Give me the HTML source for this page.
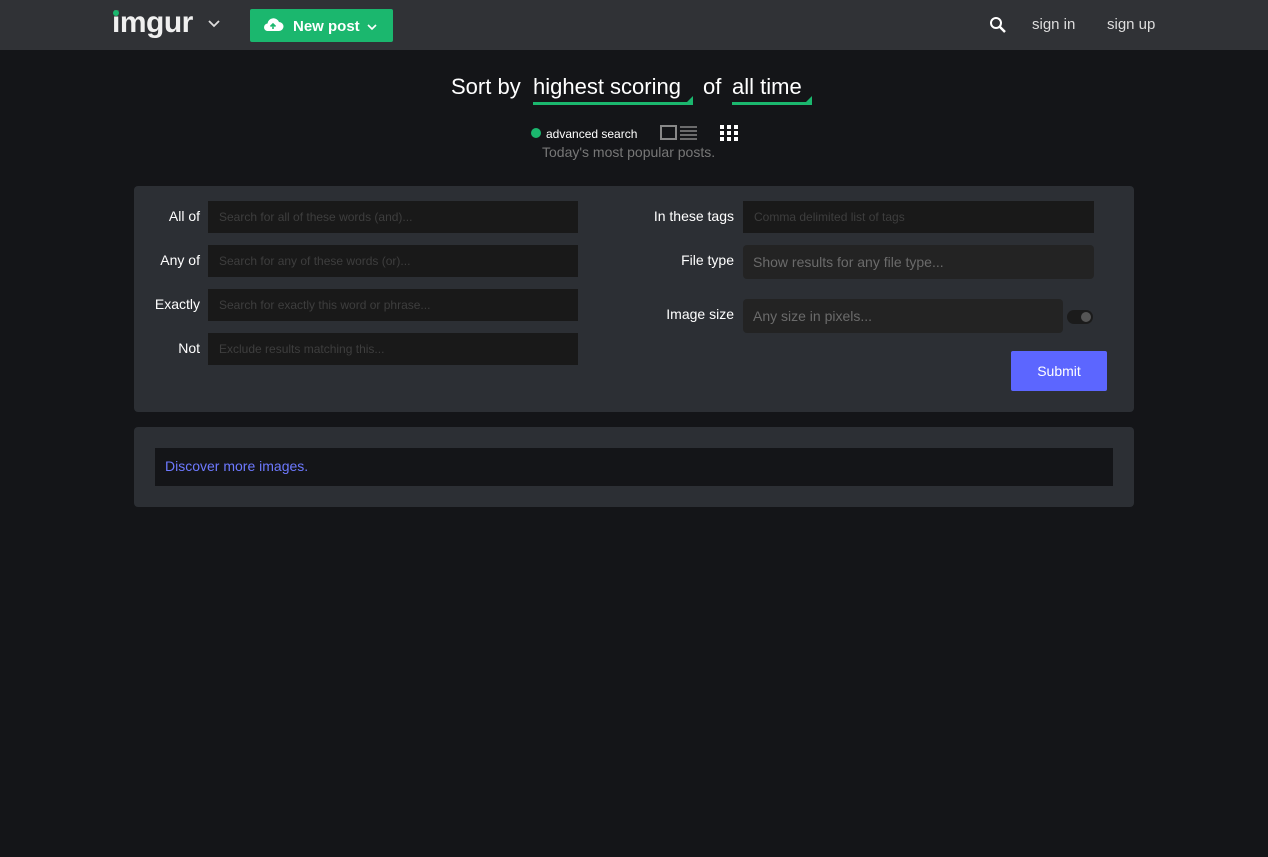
<!DOCTYPE html>
<html><head><meta charset="utf-8"><style>
*{margin:0;padding:0;box-sizing:border-box}
body{width:1268px;height:857px;background:#141518;font-family:"Liberation Sans",sans-serif;position:relative;overflow:hidden;color:#fff}
.a{position:absolute}
.hdr{left:0;top:0;width:1268px;height:50px;background:#303236}
.lbl{font-size:14px;color:#fff;text-align:right;width:120px}
.inp{background:#191919;height:32px;font-size:12px;color:#3e3e3e;padding:9px 11px}
.inp2{background:#232323;border-radius:4px;font-size:14px;color:#6b6b6b;padding:0 10px;line-height:32px}
</style></head><body>
<div class="a hdr"></div>
<div class="a" style="left:112px;top:6px;font-size:30px;font-weight:bold;letter-spacing:-0.5px;color:#f0f0f0">imgur</div>
<div class="a" style="left:113px;top:10px;width:6px;height:6px;border-radius:3px;background:#1bb76e"></div>
<svg class="a" style="left:208px;top:20px" width="12" height="8"><path d="M1 1l5 5 5-5" stroke="#ddd" stroke-width="1.8" fill="none"/></svg>
<div class="a" style="left:250px;top:9px;width:143px;height:33px;background:#1bb76e;border-radius:2px"></div>
<svg class="a" style="left:262px;top:17px" width="22" height="15"><path d="M5 14h12a4.5 4.5 0 0 0 0-9 6 6 0 0 0-11.5 1.5A3.8 3.8 0 0 0 5 14z" fill="#fff"/><path d="M11 12V7M8.5 9.5L11 7l2.5 2.5" stroke="#1bb76e" stroke-width="1.6" fill="none"/></svg>
<div class="a" style="left:293px;top:18px;font-size:15px;font-weight:bold;color:#fff">New post</div>
<svg class="a" style="left:367px;top:24px" width="10" height="7"><path d="M1 1l4 4 4-4" stroke="#fff" stroke-width="1.6" fill="none"/></svg>
<svg class="a" style="left:989px;top:16px" width="18" height="18"><circle cx="7" cy="7" r="5" stroke="#fff" stroke-width="2" fill="none"/><path d="M11 11l5 5" stroke="#fff" stroke-width="2.5"/></svg>
<div class="a" style="left:1032px;top:16px;font-size:15px;color:#ddd">sign in</div>
<div class="a" style="left:1107px;top:16px;font-size:15px;color:#ddd">sign up</div>

<div class="a" style="left:451px;top:74px;font-size:22px;color:#fff">Sort by</div>
<div class="a" style="left:533px;top:74px;font-size:22px;color:#fff">highest scoring</div>
<div class="a" style="left:533px;top:102px;width:160px;height:3px;background:#1bb76e"></div>
<div class="a" style="left:687px;top:96px;width:0;height:0;border-left:6px solid transparent;border-bottom:6px solid #1bb76e"></div>
<div class="a" style="left:703px;top:74px;font-size:22px;color:#fff">of</div>
<div class="a" style="left:732px;top:74px;font-size:22px;color:#fff">all time</div>
<div class="a" style="left:732px;top:102px;width:80px;height:3px;background:#1bb76e"></div>
<div class="a" style="left:806px;top:96px;width:0;height:0;border-left:6px solid transparent;border-bottom:6px solid #1bb76e"></div>

<div class="a" style="left:531px;top:128px;width:10px;height:10px;border-radius:5px;background:#1bb76e"></div>
<div class="a" style="left:546px;top:127px;font-size:12px;color:#fff">advanced search</div>
<div class="a" style="left:660px;top:125px;width:17px;height:15px;border:2px solid #888"></div>
<svg class="a" style="left:680px;top:125px" width="17" height="15"><path d="M0 2h17M0 6h17M0 10h17M0 14h17" stroke="#888" stroke-width="1.5"/></svg>
<svg class="a" style="left:720px;top:125px" width="19" height="17"><g fill="#fff"><rect x="0" y="0" width="4" height="4"/><rect x="7" y="0" width="4" height="4"/><rect x="14" y="0" width="4" height="4"/><rect x="0" y="6" width="4" height="4"/><rect x="7" y="6" width="4" height="4"/><rect x="14" y="6" width="4" height="4"/><rect x="0" y="12" width="4" height="4"/><rect x="7" y="12" width="4" height="4"/><rect x="14" y="12" width="4" height="4"/></g></svg>
<div class="a" style="left:542px;top:144px;font-size:14px;color:#777">Today's most popular posts.</div>

<div class="a" style="left:134px;top:186px;width:1000px;height:226px;background:#2c2f34;border-radius:4px"></div>
<div class="a lbl" style="left:80px;top:208px">All of</div>
<div class="a inp" style="left:208px;top:201px;width:370px">Search for all of these words (and)...</div>
<div class="a lbl" style="left:80px;top:252px">Any of</div>
<div class="a inp" style="left:208px;top:245px;width:370px">Search for any of these words (or)...</div>
<div class="a lbl" style="left:80px;top:296px">Exactly</div>
<div class="a inp" style="left:208px;top:289px;width:370px">Search for exactly this word or phrase...</div>
<div class="a lbl" style="left:80px;top:340px">Not</div>
<div class="a inp" style="left:208px;top:333px;width:370px">Exclude results matching this...</div>

<div class="a lbl" style="left:614px;top:208px">In these tags</div>
<div class="a inp" style="left:743px;top:201px;width:351px">Comma delimited list of tags</div>
<div class="a lbl" style="left:614px;top:252px">File type</div>
<div class="a inp2" style="left:743px;top:245px;width:351px;height:34px;line-height:34px">Show results for any file type...</div>
<div class="a lbl" style="left:614px;top:306px">Image size</div>
<div class="a inp2" style="left:743px;top:299px;width:320px;height:34px;line-height:34px">Any size in pixels...</div>
<div class="a" style="left:1067px;top:310px;width:26px;height:14px;border-radius:7px;background:#1b1b1b"></div>
<div class="a" style="left:1081px;top:312px;width:10px;height:10px;border-radius:5px;background:#555"></div>
<div class="a" style="left:1011px;top:351px;width:96px;height:40px;background:#5c66ff;border-radius:2px;font-size:14px;color:#fff;text-align:center;line-height:40px">Submit</div>

<div class="a" style="left:134px;top:427px;width:1000px;height:80px;background:#2c2f34;border-radius:4px"></div>
<div class="a" style="left:155px;top:448px;width:958px;height:38px;background:#141518;font-size:14px;color:#6d79ff;padding:10px">Discover more images.</div>
</body></html>
